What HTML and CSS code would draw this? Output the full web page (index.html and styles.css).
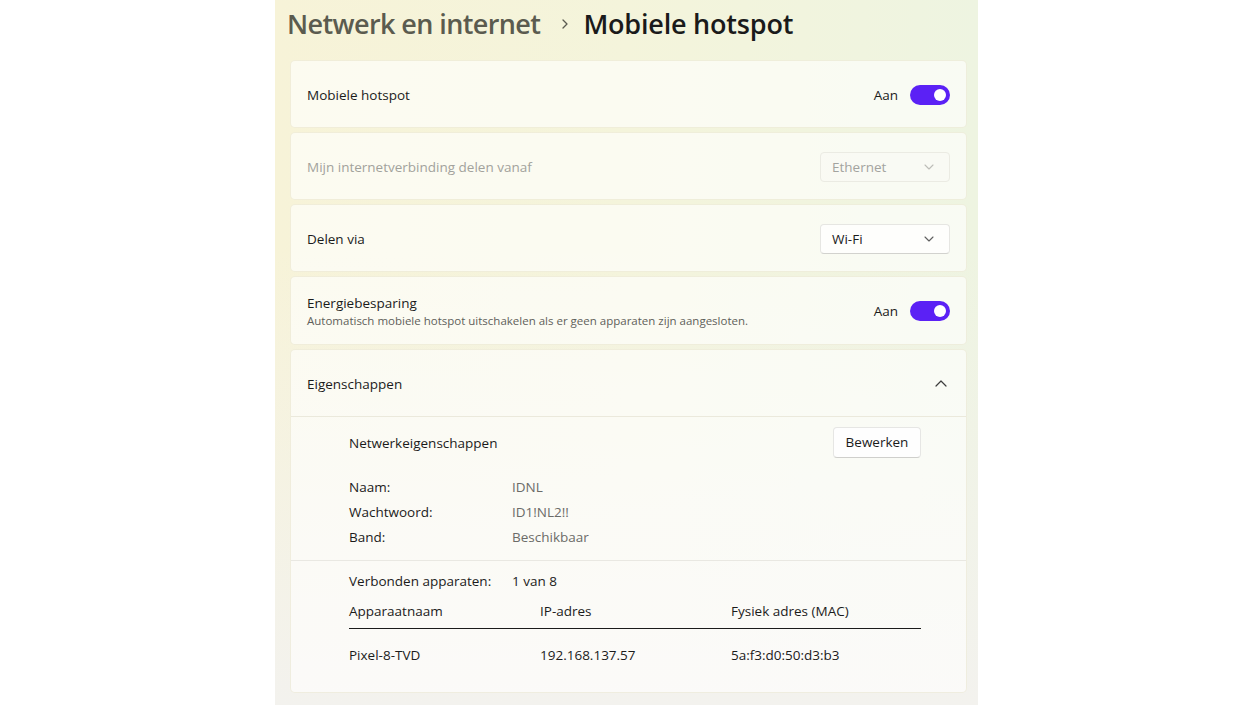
FILE: index.html
```html
<!DOCTYPE html>
<html lang="nl">
<head>
<meta charset="utf-8">
<title>Mobiele hotspot</title>
<link rel="stylesheet" href="styles.css">
</head>
<body>
<div class="panel">
  <header class="page-header">
    <span class="crumb">Netwerk en internet</span>
    <svg class="crumb-sep" width="8" height="10" viewBox="0 0 8 10"><polyline points="2,1 6,5 2,9" fill="none" stroke="#5a5a50" stroke-width="1.3" stroke-linecap="round" stroke-linejoin="round"/></svg>
    <h1 class="title">Mobiele hotspot</h1>
  </header>

  <div class="cards">
    <div class="card">
      <div class="card-text"><div class="label">Mobiele hotspot</div></div>
      <div class="control">
        <span class="state">Aan</span>
        <span class="toggle"><span class="knob"></span></span>
      </div>
    </div>

    <div class="card">
      <div class="card-text"><div class="label disabled">Mijn internetverbinding delen vanaf</div></div>
      <div class="control">
        <div class="dropdown is-disabled">
          <span>Ethernet</span>
          <svg class="chev" width="10" height="6" viewBox="0 0 10 6"><polyline points="1,1 5,5 9,1" fill="none" stroke="#bdbdb8" stroke-width="1.1" stroke-linecap="round" stroke-linejoin="round"/></svg>
        </div>
      </div>
    </div>

    <div class="card">
      <div class="card-text"><div class="label">Delen via</div></div>
      <div class="control">
        <div class="dropdown">
          <span>Wi-Fi</span>
          <svg class="chev" width="10" height="6" viewBox="0 0 10 6"><polyline points="1,1 5,5 9,1" fill="none" stroke="#5f5f5f" stroke-width="1.1" stroke-linecap="round" stroke-linejoin="round"/></svg>
        </div>
      </div>
    </div>

    <div class="card card-tall">
      <div class="card-text">
        <div class="label">Energiebesparing</div>
        <div class="sub">Automatisch mobiele hotspot uitschakelen als er geen apparaten zijn aangesloten.</div>
      </div>
      <div class="control">
        <span class="state">Aan</span>
        <span class="toggle"><span class="knob"></span></span>
      </div>
    </div>

    <div class="card expander">
      <div class="exp-head">
        <div class="label">Eigenschappen</div>
        <svg class="chev-up" width="12" height="7" viewBox="0 0 12 7"><polyline points="1,6 6,1 11,6" fill="none" stroke="#3c3c3c" stroke-width="1.2" stroke-linecap="round" stroke-linejoin="round"/></svg>
      </div>
      <div class="exp-section">
        <div class="net-row">
          <span class="label">Netwerkeigenschappen</span>
          <button class="btn">Bewerken</button>
        </div>
        <div class="info">
          <span class="k">Naam:</span><span class="v">IDNL</span>
          <span class="k">Wachtwoord:</span><span class="v">ID1!NL2!!</span>
          <span class="k">Band:</span><span class="v">Beschikbaar</span>
        </div>
      </div>
      <div class="exp-section devices">
        <div class="count">
          <span class="k">Verbonden apparaten:</span><span class="k">1 van 8</span>
        </div>
        <div class="table">
          <div class="th">Apparaatnaam</div>
          <div class="th">IP-adres</div>
          <div class="th">Fysiek adres (MAC)</div>
          <div class="td">Pixel-8-TVD</div>
          <div class="td">192.168.137.57</div>
          <div class="td">5a:f3:d0:50:d3:b3</div>
        </div>
      </div>
    </div>
  </div>
</div>
</body>
</html>
```

FILE: styles.css
```css
* { box-sizing: border-box; }
html, body { margin: 0; padding: 0; background: #ffffff; }
body {
  font-family: "Open Sans", "Noto Sans", "Liberation Sans", sans-serif;
  color: #1b1b1b;
  font-size: 13.5px;
}
.panel {
  width: 703px;
  height: 705px;
  margin-left: 275px;
  overflow: hidden;
  background:
    linear-gradient(180deg, rgba(243,242,238,0) 35%, rgba(243,242,238,1) 100%),
    linear-gradient(90deg, #f7f3d8 0%, #f4f4db 50%, #eef4e1 100%);
}
.page-header {
  display: flex;
  align-items: center;
  height: 46px;
  padding: 0 0 0 12px;
  margin-bottom: 14px;
}
.crumb {
  font-size: 27px;
  font-weight: 600;
  color: #5b5b4f;
  letter-spacing: -0.6px;
}
.crumb-sep { margin: 2px 14px 0 21px; }
.title {
  margin: 0;
  font-size: 27px;
  font-weight: 600;
  color: #1a1a1a;
  letter-spacing: -0.2px;
}
.cards {
  padding: 0 11px 0 15px;
  display: flex;
  flex-direction: column;
  gap: 4px;
}
.card {
  height: 68px;
  background: rgba(255,255,255,0.62);
  border: 1px solid rgba(190,180,110,0.18);
  border-radius: 5px;
  display: flex;
  align-items: center;
  justify-content: space-between;
  padding: 1px 16px 0 16px;
}
.card-tall { height: 69px; }
.label { font-size: 13.5px; color: #1b1b1b; line-height: 20px; }
.label.disabled { color: #a2a29c; }
.sub { font-size: 11.5px; color: #5f5f5a; line-height: 16px; }
.control { display: flex; align-items: center; }
.state { font-size: 13.5px; margin-right: 12px; }
.toggle {
  width: 40px;
  height: 20px;
  border-radius: 10px;
  background: #5b21f5;
  display: flex;
  align-items: center;
  justify-content: flex-end;
  padding-right: 4px;
}
.knob { width: 12px; height: 12px; border-radius: 50%; background: #ffffff; }
.dropdown {
  width: 130px;
  height: 30px;
  border-radius: 4px;
  background: #fefefc;
  border: 1px solid #e6e6e2;
  border-bottom-color: #d2d2ce;
  display: flex;
  align-items: center;
  justify-content: space-between;
  padding: 0 15px 0 11px;
  font-size: 13.5px;
  color: #1b1b1b;
}
.dropdown.is-disabled {
  background: rgba(250,250,245,0.4);
  border-color: #ebebe3;
  color: #a3a39f;
}
.expander {
  height: 344px;
  display: block;
  padding: 0;
}
.exp-head {
  height: 67px;
  display: flex;
  align-items: center;
  justify-content: space-between;
  padding: 1px 19px 0 16px;
  border-bottom: 1px solid #ebe9dc;
}
.exp-section {
  padding: 10px 45px 11px 58px;
  border-bottom: 1px solid #e9e8e2;
}
.net-row {
  height: 30px;
  display: flex;
  align-items: center;
  justify-content: space-between;
}
.net-row .label { padding-top: 2px; }
.btn {
  width: 88px;
  height: 31px;
  font-family: inherit;
  font-size: 13.5px;
  color: #1b1b1b;
  background: #fefefe;
  border: 1px solid #e6e6e4;
  border-bottom-color: #cfcfcc;
  border-radius: 4px;
  padding: 0;
  margin: 0;
}
.info {
  margin-top: 17px;
  display: grid;
  grid-template-columns: 163px 1fr;
  grid-auto-rows: 25px;
  align-items: center;
}
.k { font-size: 13.5px; color: #1b1b1b; }
.v { font-size: 13.5px; color: #6b6b68; }
.devices {
  border-bottom: none;
  padding-top: 10px;
}
.count {
  height: 20px;
  display: grid;
  grid-template-columns: 163px 1fr;
  align-items: center;
}
.table {
  margin-top: 10px;
  display: grid;
  grid-template-columns: 191px 191px 1fr;
}
.th {
  height: 28px;
  padding-bottom: 8px;
  line-height: 20px;
  border-bottom: 1px solid #1b1b1b;
  font-size: 13.5px;
}
.td {
  padding-top: 16px;
  line-height: 20px;
  font-size: 13.5px;
}
```
